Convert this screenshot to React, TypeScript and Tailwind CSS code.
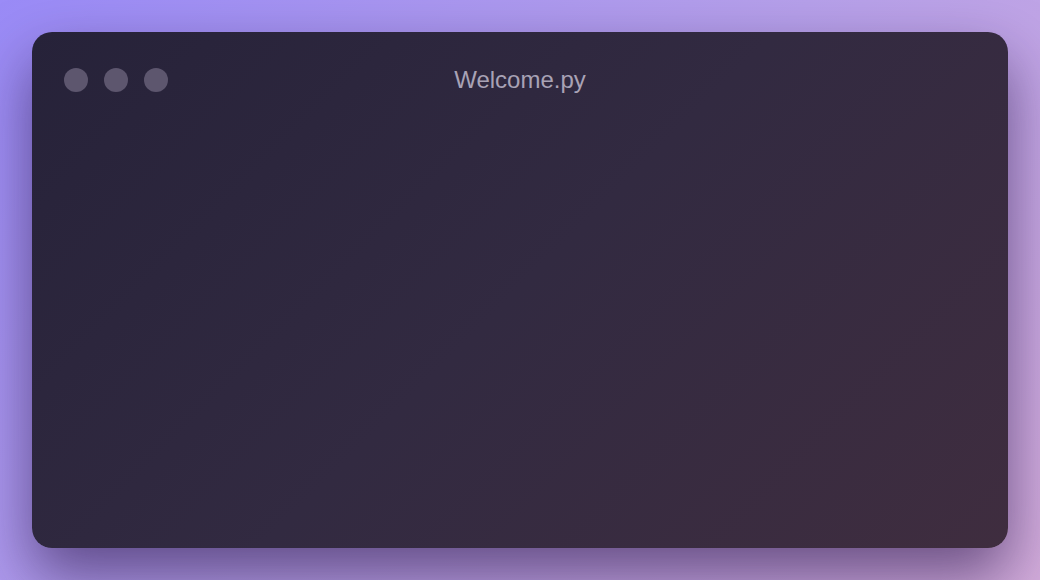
export default function App() {
  return (
    <div className="w-[1040px] h-[580px] p-8 bg-[linear-gradient(135deg,#9a8bf7_0%,#b6a0ea_50%,#d4addc_100%)] font-['Liberation_Sans',Arial,sans-serif]">
      <div className="w-full h-full rounded-[20px] bg-[linear-gradient(135deg,#262239_0%,#322a41_50%,#3f2d3f_100%)] shadow-[0_28px_60px_0_rgba(40,20,70,0.6)] px-8 pt-9 relative">
        <div className="flex items-center gap-4">
          <span className="w-6 h-6 rounded-full bg-[#5d566e]" />
          <span className="w-6 h-6 rounded-full bg-[#5d566e]" />
          <span className="w-6 h-6 rounded-full bg-[#5d566e]" />
        </div>
        <div className="absolute left-0 right-0 top-[34px] text-center text-[24px] leading-[28px] text-[#a8a2b5]">
          Welcome.py
        </div>
      </div>
    </div>
  );
}
